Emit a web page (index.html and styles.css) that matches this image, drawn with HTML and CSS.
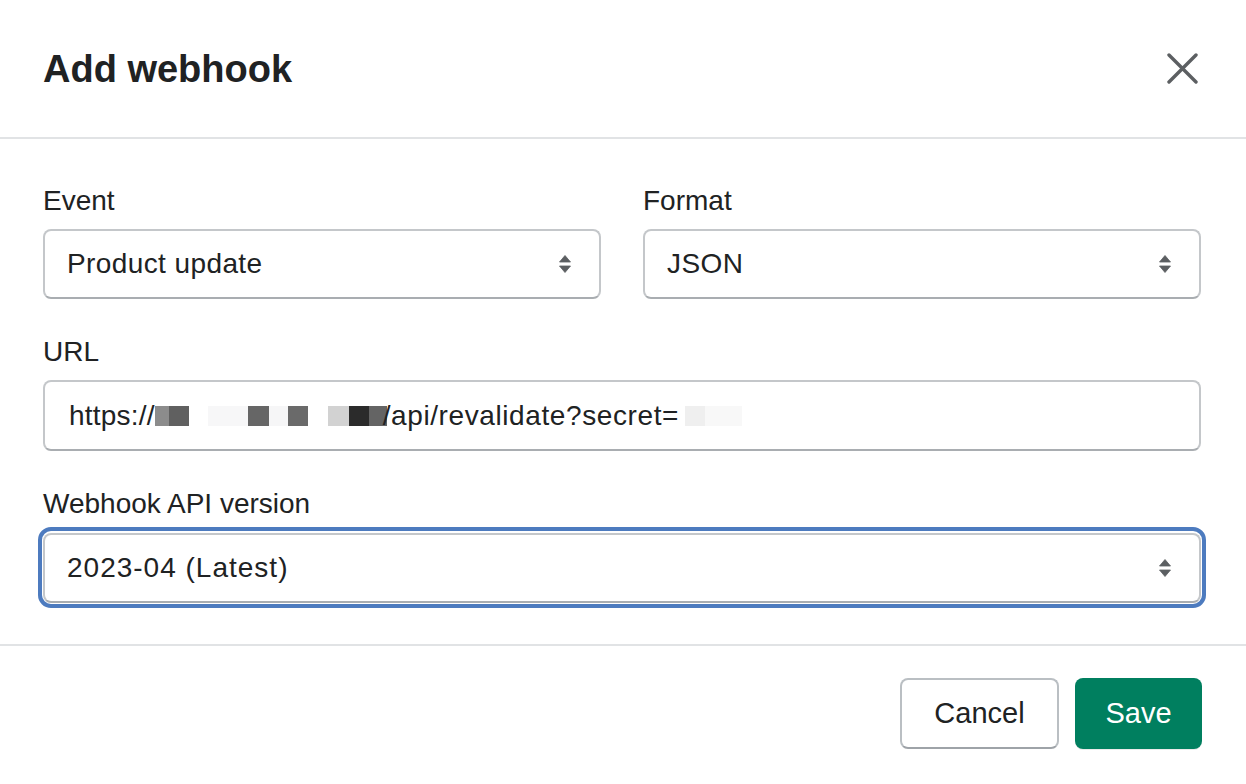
FILE: index.html
```html
<!DOCTYPE html>
<html lang="en">
<head>
<meta charset="utf-8">
<title>Add webhook</title>
<link rel="stylesheet" href="styles.css">
</head>
<body>
<div class="modal">
  <header class="modal-header">
    <h1 class="modal-title">Add webhook</h1>
    <button class="close-btn" aria-label="Close">
      <svg width="31" height="31" viewBox="0 0 31 31"><path d="M2 2 L29 29 M29 2 L2 29" stroke="#5c5f62" stroke-width="3.4" stroke-linecap="round" fill="none"/></svg>
    </button>
  </header>
  <section class="modal-body">
    <div class="row-2">
      <div class="field">
        <label class="label">Event</label>
        <div class="select">
          <span class="select-text">Product update</span>
          <svg class="arrows" width="12" height="18" viewBox="0 0 12 18"><path d="M6 0.5 L11.5 7 L0.5 7 Z M0.5 11 L11.5 11 L6 17.5 Z" fill="#5c5f62" stroke="#5c5f62" stroke-width="0.8" stroke-linejoin="round"/></svg>
        </div>
      </div>
      <div class="field">
        <label class="label">Format</label>
        <div class="select">
          <span class="select-text">JSON</span>
          <svg class="arrows" width="12" height="18" viewBox="0 0 12 18"><path d="M6 0.5 L11.5 7 L0.5 7 Z M0.5 11 L11.5 11 L6 17.5 Z" fill="#5c5f62" stroke="#5c5f62" stroke-width="0.8" stroke-linejoin="round"/></svg>
        </div>
      </div>
    </div>
    <div class="field">
      <label class="label">URL</label>
      <div class="input">
        <span class="input-text">https://<span class="px px1"></span><span class="px px2"></span><span class="px px3"></span><span class="px px4"></span><span class="px px5"></span><span class="px px6"></span><span class="px px7"></span><span class="px px8"></span><span class="px px9"></span><span class="px px10"></span><span class="px px11"></span><span class="path">/api/revalidate?secret=</span><span class="px px12"></span><span class="px px13"></span><span class="px px14"></span></span>
      </div>
    </div>
    <div class="field">
      <label class="label">Webhook API version</label>
      <div class="focus-ring">
        <div class="select">
          <span class="select-text version">2023-04 (Latest)</span>
          <svg class="arrows" width="12" height="18" viewBox="0 0 12 18"><path d="M6 0.5 L11.5 7 L0.5 7 Z M0.5 11 L11.5 11 L6 17.5 Z" fill="#5c5f62" stroke="#5c5f62" stroke-width="0.8" stroke-linejoin="round"/></svg>
        </div>
      </div>
    </div>
  </section>
  <footer class="modal-footer">
    <button class="btn btn-secondary">Cancel</button>
    <button class="btn btn-primary">Save</button>
  </footer>
</div>
</body>
</html>
```
FILE: styles.css
```css
* { box-sizing: border-box; }
html, body { margin: 0; padding: 0; background: #ffffff; }
body {
  font-family: "Liberation Sans", Arial, sans-serif;
  color: #202223;
  width: 1246px;
  height: 784px;
  overflow: hidden;
}
.modal { display: flex; flex-direction: column; }
.modal-header {
  height: 139px;
  display: flex;
  align-items: center;
  justify-content: space-between;
  padding: 0 48px 0 43px;
  border-bottom: 2px solid #e1e3e5;
}
.modal-title {
  margin: 0;
  font-size: 38px;
  font-weight: 700;
  line-height: 46px;
  color: #202223;
}
.close-btn {
  border: 0;
  background: none;
  padding: 0;
  width: 31px;
  height: 31px;
  display: flex;
}
.modal-body {
  padding: 42px 45px 41px 43px;
  display: flex;
  flex-direction: column;
  gap: 33px;
}
.row-2 {
  display: grid;
  grid-template-columns: 1fr 1fr;
  column-gap: 42px;
}
.field { display: flex; flex-direction: column; }
.label {
  font-size: 28px;
  line-height: 40px;
  margin-bottom: 8px;
  color: #202223;
}
.select, .input {
  height: 70px;
  border: 2px solid #c4c7ca;
  border-bottom-color: #a9adb1;
  border-radius: 8px;
  background: #fff;
  display: flex;
  align-items: center;
  padding: 0 28px 0 22px;
}
.input { height: 71px; padding-left: 24px; }
.select { justify-content: space-between; }
.select-text, .input-text {
  font-size: 28px;
  letter-spacing: 0.4px;
  color: #202223;
  white-space: nowrap;
}
.version { letter-spacing: 1px; }
.input-text { letter-spacing: 0.2px; }
.path { letter-spacing: 0.6px; }
.arrows { display: block; }
.focus-ring {
  margin: -5px -5px -5px -5px;
  padding: 2px 1px 1px 1px;
  border: 4px solid #4d7bbf;
  border-radius: 13px;
}
.px {
  display: inline-block;
  height: 20px;
  vertical-align: -1px;
}
.px1 { width: 14px; background: #8c8c8c; }
.px2 { width: 20px; background: #606060; }
.px3 { width: 19px; background: #ffffff; }
.px4 { width: 40px; background: #f7f7f8; }
.px5 { width: 21px; background: #666666; }
.px6 { width: 19px; background: #f6f6f7; }
.px7 { width: 20px; background: #6a6a6a; }
.px8 { width: 20px; background: #ffffff; }
.px9 { width: 21px; background: #d2d2d2; }
.px10 { width: 20px; background: #2b2b2b; }
.px11 { width: 18px; background: #646464; margin-right: -4px; }
.px12 { width: 6px; background: #ffffff; }
.px13 { width: 20px; background: #efefef; }
.px14 { width: 37px; background: #f8f8f8; }
.modal-footer {
  border-top: 2px solid #e1e3e5;
  display: flex;
  justify-content: flex-end;
  gap: 16px;
  padding: 32px 44px 0 0;
}
.btn {
  height: 71px;
  border-radius: 8px;
  font-family: "Liberation Sans", Arial, sans-serif;
  font-size: 29px;
  padding: 0;
  display: flex;
  align-items: center;
  justify-content: center;
}
.btn-secondary {
  width: 159px;
  background: #fff;
  color: #202223;
  border: 2px solid #babfc3;
  border-bottom-color: #9ea3a8;
}
.btn-primary {
  width: 127px;
  background: #007f5f;
  color: #fff;
  border: 0;
  box-shadow: 0 1px 0 rgba(0,0,0,0.08);
}
```
